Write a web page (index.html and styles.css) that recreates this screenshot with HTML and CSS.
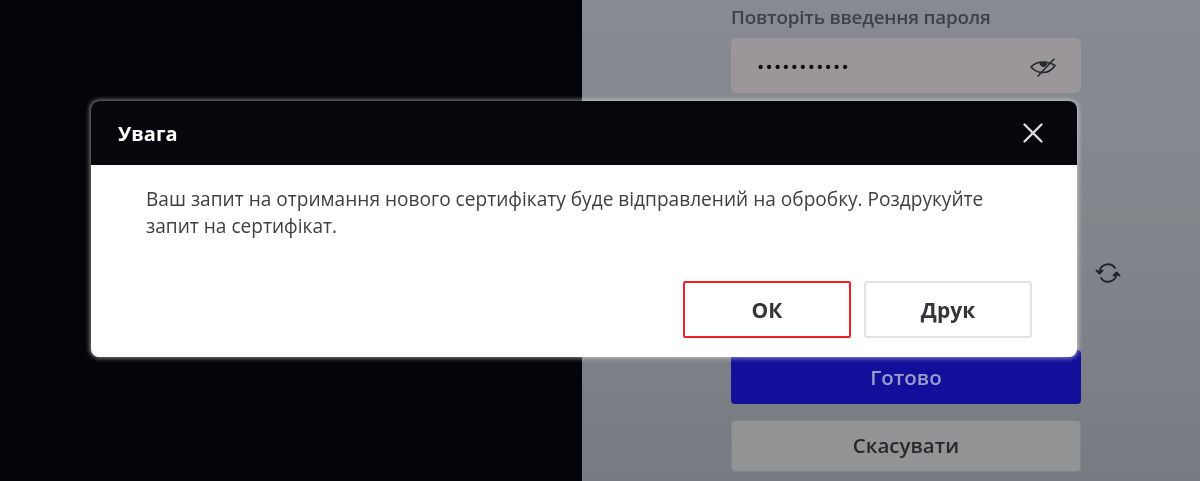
FILE: index.html
```html
<!DOCTYPE html>
<html lang="uk">
<head>
<meta charset="utf-8">
<title>Увага</title>
<link rel="stylesheet" href="styles.css">
</head>
<body>
<div class="screen">
  <div class="left"></div>
  <div class="right">
    <form class="form">
      <div class="label">Повторіть введення пароля</div>
      <div class="field">
        <span class="dots">•••••••••••</span>
        <svg class="eye" width="28" height="22" viewBox="0 0 28 22" fill="none" stroke="#26282c" stroke-width="1.6" stroke-linecap="round" stroke-linejoin="round">
          <path d="M2 11C5 7.500 9 6 14 6C19 6 23 7.500 26 9.500C23 14 19 16.500 14 16.500C9 16.500 5 14.500 2 11Z"/>
          <path d="M9 20L25 3"/>
          <path d="M10 6.500C11 9.500 13 11 14.500 11C16.500 11 18 9 18.500 6.500Z" fill="#26282c" stroke="none"/>
        </svg>
      </div>
      <div class="captcha">
        <div class="captcha-box"></div>
        <svg class="refresh" width="26" height="26" viewBox="0 0 26 26" fill="none" stroke="#1f2125" stroke-width="1.800" stroke-linecap="round">
          <path d="M4.500 12.500A8.500 8.500 0 0 1 20 8"/>
          <path d="M21.500 13.500A8.500 8.500 0 0 1 6 18"/>
          <path d="M1.500 10.500L4.500 13.500L7.500 10.500" fill="#1f2125" stroke-linejoin="round"/>
          <path d="M18.500 15.500L21.500 12.500L24.500 15.500" fill="#1f2125" stroke-linejoin="round"/>
        </svg>
      </div>
      <div class="btn primary">Готово</div>
      <div class="btn secondary">Скасувати</div>
    </form>
  </div>
  <div class="dialog">
    <div class="dialog-head">
      <span class="dialog-title">Увага</span>
      <svg class="close" width="22" height="22" viewBox="0 0 22 22" fill="none" stroke="#dcdcdc" stroke-width="2.400" stroke-linecap="round">
        <path d="M2.500 2.500L19.500 19.500"/>
        <path d="M19.500 2.500L2.500 19.500"/>
      </svg>
    </div>
    <div class="dialog-body">
      <p class="message">Ваш запит на отримання нового сертифікату буде відправлений на обробку. Роздрукуйте запит на сертифікат.</p>
      <div class="actions">
        <div class="dbtn focus">ОК</div>
        <div class="dbtn">Друк</div>
      </div>
    </div>
  </div>
</div>
</body>
</html>
```
FILE: styles.css
```css
* { box-sizing: border-box; }
html, body { margin: 0; padding: 0; height: 100%; overflow: hidden; background: #000; }
body { font-family: "Open Sans", "Noto Sans", "Liberation Sans", sans-serif; }
.screen {
  position: relative;
  width: 1200px;
  height: 481px;
  display: grid;
  grid-template-columns: 582px 618px;
  filter: blur(0.6px);
  overflow: hidden;
}
.left { background: #03030a; }
.right { background: linear-gradient(180deg, #878a90 0%, #83868b 45%, #777a81 100%); }
.form {
  width: 350px;
  margin-left: 149px;
  padding-top: 5px;
  display: flex;
  flex-direction: column;
}
.label { font-size: 18.800px; line-height: 24px; color: #3f4146; font-weight: 600; letter-spacing: -0.2px; white-space: nowrap; }
.field {
  margin-top: 9px;
  height: 55px;
  border-radius: 5px;
  background: #9a9699;
  display: flex;
  align-items: center;
  justify-content: space-between;
  padding: 2px 24px 0 27px;
}
.dots { font-size: 15px; letter-spacing: 3.200px; color: #0d0d10; font-weight: 700; line-height: 1; font-family: "Liberation Sans", sans-serif; }
.captcha { margin-top: 202px; height: 41px; position: relative; display: flex; }
.captcha-box { flex: 1; }
.refresh { position: absolute; left: 364px; top: -35px; }
.btn {
  border-radius: 4px;
  display: flex;
  align-items: center;
  justify-content: center;
  font-size: 20.500px;
  font-weight: 600;
}
.primary { background: #12109a; color: #9a9ccb; margin-top: 14px; height: 54px; }
.secondary { background: #929395; color: #26282c; margin-top: 16px; height: 52px; padding-bottom: 3px; border: 1px solid #83858a; }
.dialog {
  position: absolute;
  left: 91px;
  top: 101px;
  width: 986px;
  height: 256px;
  border-radius: 8px;
  overflow: hidden;
  background: #fff;
  display: flex;
  flex-direction: column;
  box-shadow: 0 0 5px 1px rgba(255, 255, 255, 0.55);
}
.dialog-head {
  height: 64px;
  background: #06060c;
  display: flex;
  align-items: center;
  justify-content: space-between;
  padding: 0 33px 0 27px;
  flex: none;
}
.dialog-title { color: #fff; font-size: 20px; font-weight: 700; }
.dialog-body { flex: 1; padding: 21px 45px 0 55px; display: flex; flex-direction: column; }
.message { margin: 0; max-width: 850px; font-size: 19.100px; line-height: 27px; color: #3d3f44; }
.actions { margin-top: 41px; display: flex; justify-content: flex-end; gap: 13px; }
.dbtn {
  width: 168px;
  height: 57px;
  display: flex;
  align-items: center;
  justify-content: center;
  border: 2px solid #e2e2e4;
  border-radius: 4px;
  font-size: 21px;
  font-weight: 700;
  color: #33353a;
  background: #fff;
}
.focus { border-color: #f5202a; border-radius: 2px; }
```
